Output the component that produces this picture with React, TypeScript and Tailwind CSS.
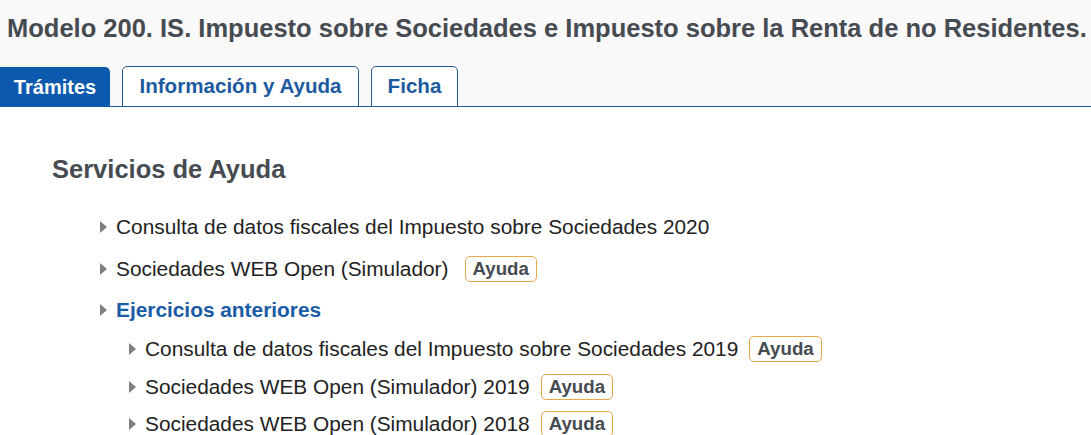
import React from 'react';

const Arrow: React.FC = () => (
  <svg width="7" height="12" viewBox="0 0 7 12" className="shrink-0">
    <path d="M0 0 L7 6 L0 12 Z" fill="#808080" />
  </svg>
);

const Ayuda: React.FC = () => (
  <span className="inline-flex items-center h-[26px] px-[7px] border border-[#e3a94a] rounded-[5px] text-[18.7px] font-bold text-[#464b52] leading-none">
    Ayuda
  </span>
);

interface ItemProps {
  label: string;
  help?: boolean;
  link?: boolean;
  gap?: string;
}

const Item: React.FC<ItemProps> = ({ label, help, link, gap = 'gap-[16px]' }) => (
  <li className={`flex items-center ${gap}`}>
    <span className="flex items-center gap-[9px]">
      <Arrow />
      <span
        className={
          link
            ? 'text-[20.85px] font-bold text-[#1a5ba6]'
            : 'text-[20.85px] text-[#222222]'
        }
      >
        {label}
      </span>
    </span>
    {help && <Ayuda />}
  </li>
);

export default function App() {
  return (
    <div className="w-[1091px] h-[435px] overflow-hidden bg-white font-['Liberation_Sans',Arial,sans-serif]">
      <div className="bg-[#f9f9f9] border-b border-[#26598f]">
        <h1 className="pt-[12px] pl-[7px] text-[25.5px] font-bold text-[#464b52] leading-[32px] whitespace-nowrap">
          Modelo 200. IS. Impuesto sobre Sociedades e Impuesto sobre la Renta de no Residentes.
        </h1>
        <nav className="flex items-end gap-[12px] mt-[22px] -mb-px">
          <div className="h-[40px] w-[110px] flex items-center justify-center bg-[#0b5aad] rounded-tr-[5px] text-white text-[20px] font-bold">
            Trámites
          </div>
          <div className="h-[41px] w-[237px] flex items-center justify-center bg-white border border-[#26598f] rounded-t-[5px] text-[#1c5aa0] text-[20.6px] font-bold">
            Información y Ayuda
          </div>
          <div className="h-[41px] w-[87px] flex items-center justify-center bg-white border border-[#26598f] rounded-t-[5px] text-[#1c5aa0] text-[20.6px] font-bold">
            Ficha
          </div>
        </nav>
      </div>

      <section className="pl-[52px] pt-[46px]">
        <h2 className="text-[25.5px] font-bold text-[#464b52] leading-[32px]">Servicios de Ayuda</h2>
        <ul className="pl-[48px] mt-[21px] flex flex-col">
          <div className="h-[42px] flex items-center">
            <Item label="Consulta de datos fiscales del Impuesto sobre Sociedades 2020" />
          </div>
          <div className="h-[42px] flex items-center">
            <Item label="Sociedades WEB Open (Simulador)" help />
          </div>
          <div className="h-[40px] flex items-center">
            <Item label="Ejercicios anteriores" link />
          </div>
          <ul className="pl-[29px] flex flex-col">
            <div className="h-[38px] flex items-center">
              <Item label="Consulta de datos fiscales del Impuesto sobre Sociedades 2019" help gap="gap-[11px]" />
            </div>
            <div className="h-[38px] flex items-center">
              <Item label="Sociedades WEB Open (Simulador) 2019" help gap="gap-[11px]" />
            </div>
            <div className="h-[36px] flex items-center">
              <Item label="Sociedades WEB Open (Simulador) 2018" help gap="gap-[11px]" />
            </div>
          </ul>
        </ul>
      </section>
    </div>
  );
}
